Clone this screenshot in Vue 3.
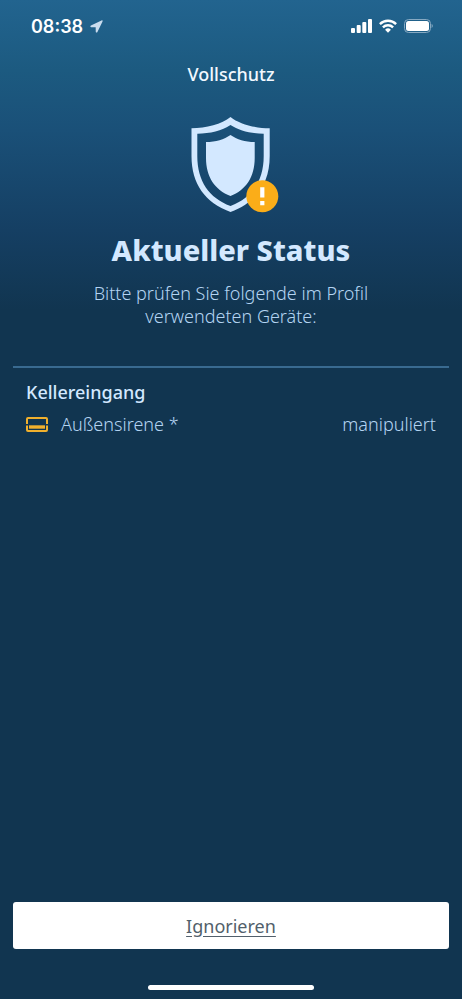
<script setup>
const title = 'Vollschutz'
const rooms = [
  {
    name: 'Kellereingang',
    devices: [{ name: 'Außensirene *', state: 'manipuliert' }]
  }
]
</script>

<template>
  <div class="screen">
    <div class="status-bar">
      <div class="clock">
        <span>08:38</span>
        <svg class="location" viewBox="0 0 14 14" aria-hidden="true">
          <path d="M12.4 0.5 L1 6 C0 6.500 0.300 7.700 1.300 7.700 L6.100 7.800 L6.200 12.600 C6.200 13.700 7.500 13.900 8 13 L13.500 1.600 C13.900 0.800 13.200 0.100 12.400 0.500 Z" />
        </svg>
      </div>
      <div class="indicators">
        <svg class="signal" viewBox="0 0 21 14" aria-hidden="true">
          <rect x="0" y="9" width="4" height="5" rx="1" />
          <rect x="5.700" y="6" width="4" height="8" rx="1" />
          <rect x="11.300" y="3" width="4" height="11" rx="1" />
          <rect x="17" y="0" width="4" height="14" rx="1" />
        </svg>
        <svg class="wifi" viewBox="0 0 18 14" aria-hidden="true">
          <path d="M0.900 5.100 A11.500 11.500 0 0 1 17.100 5.100" />
          <path d="M3.900 8.300 A7.300 7.300 0 0 1 14.100 8.300" />
          <path class="dot" d="M6.100 10.700 A4.200 4.200 0 0 1 11.900 10.700 L9 13.700 Z" />
        </svg>
        <svg class="battery" viewBox="0 0 29 14" aria-hidden="true">
          <rect class="case" x="0.5" y="0.5" width="26" height="13" rx="4" />
          <rect class="charge" x="2" y="2" width="23" height="10" rx="2.5" />
          <path class="tip" d="M27.600 4.800 Q30 7 27.600 9.200 Z" />
        </svg>
      </div>
    </div>

    <header class="title">{{ title }}</header>

    <main class="content">
      <section class="summary">
        <svg class="shield" viewBox="0 0 100 98" aria-hidden="true">
          <path
            class="shape"
            fill-rule="evenodd"
            d="M49.5 1 C41 8 25 12.3 10.5 12.3 V40 C10.5 68 24 86.5 49.5 96 C75 86.5 88.7 68 88.7 40 V12.3 C74 12.3 58 8 49.5 1 Z M49.5 9 C41 14.5 29 17.7 16.3 17.7 V40 C16.3 65 28 82 49.5 90 C71 82 82.7 65 82.7 40 V17.7 C70 17.7 58 14.5 49.5 9 Z"
          />
          <path class="shape" d="M49.5 19 C43 23.5 35 26 25 26 V42 C25 61 34 74 49.5 80 C65 74 73.7 61 73.7 42 V26 C64 26 56 23.5 49.5 19 Z" />
          <circle class="badge" cx="81.3" cy="80.3" r="16" />
          <path class="mark" d="M79.2 71.3 h4.2 v10.3 h-4.2 Z M79.2 85 h4.2 v4.2 h-4.2 Z" />
        </svg>
        <h1>Aktueller Status</h1>
        <p>Bitte prüfen Sie folgende im Profil verwendeten Geräte:</p>
      </section>

      <section v-for="room in rooms" :key="room.name" class="room">
        <h2>{{ room.name }}</h2>
        <ul>
          <li v-for="device in room.devices" :key="device.name">
            <svg class="siren" viewBox="0 0 22 15" aria-hidden="true">
              <path d="M1 7 V2 Q1 1 2 1 H20 Q21 1 21 2 V7 M1 8.6 V13 Q1 14 2 14 H20 Q21 14 21 13 V8.6" />
              <rect x="3" y="8.3" width="16" height="3.4" />
            </svg>
            <span class="device">{{ device.name }}</span>
            <span class="state">{{ device.state }}</span>
          </li>
        </ul>
      </section>
    </main>

    <footer>
      <button type="button">Ignorieren</button>
      <div class="home-indicator"></div>
    </footer>
  </div>
</template>

<style>
body {
  margin: 0;
  background: #113550;
}
</style>

<style scoped>
.screen {
  display: flex;
  flex-direction: column;
  box-sizing: border-box;
  min-height: 100vh;
  padding: 0 13px 9px;
  background: linear-gradient(#22648f 0, #1c5a80 70px, #1a5078 130px, #153f63 230px, #113550 310px);
  color: #d3e8ff;
  font-family: "Noto Sans", sans-serif;
  font-size: 18px;
}

.status-bar {
  display: flex;
  align-items: center;
  justify-content: space-between;
  height: 52px;
  padding: 0 16px 0 18px;
  color: #fff;
  font-family: Inter, sans-serif;
  font-size: 18px;
  font-weight: 600;
}

.clock,
.indicators {
  display: flex;
  align-items: center;
  gap: 7px;
}

.location {
  width: 13px;
  height: 13px;
  fill: #c9dcee;
}

.signal {
  width: 21px;
  height: 14px;
  fill: #fff;
}

.wifi {
  width: 18px;
  height: 14px;
  fill: none;
  stroke: #fff;
  stroke-width: 2.4;
}

.wifi .dot {
  fill: #fff;
  stroke: none;
}

.battery {
  width: 29px;
  height: 14px;
}

.case {
  fill: none;
  stroke: #86a9c2;
}

.charge {
  fill: #fff;
}

.tip {
  fill: #86a9c2;
}

.title {
  color: #f2f8ff;
  font-weight: 500;
  line-height: 44px;
  text-align: center;
}

.content {
  flex: 1;
}

.summary {
  display: flex;
  flex-direction: column;
  align-items: center;
  padding: 20px 64px 38px;
  border-bottom: 2px solid #396a90;
  text-align: center;
}

.shield {
  width: 100px;
  height: 98px;
}

.shape {
  fill: #d3e8ff;
}

.badge {
  fill: #fbad18;
}

.mark {
  fill: #fff;
}

h1 {
  margin: 16px 0 12px;
  font-size: 29px;
  font-weight: 800;
  line-height: 40px;
}

p {
  margin: 0;
  color: #b4d4f2;
  font-weight: 300;
  line-height: 23px;
}

.room {
  padding: 10px 13px;
}

h2 {
  margin: 0 0 4px;
  font-size: 18px;
  font-weight: 500;
  line-height: 28px;
}

ul {
  margin: 0;
  padding: 0;
  list-style: none;
}

li {
  display: flex;
  align-items: center;
  gap: 13px;
  color: #b4d4f2;
  font-weight: 300;
  line-height: 28px;
}

.siren {
  width: 22px;
  height: 15px;
  fill: #f0b02d;
}

.siren path {
  fill: none;
  stroke: #f0b02d;
  stroke-width: 2;
}

.state {
  margin-left: auto;
}

footer {
  display: flex;
  flex-direction: column;
  align-items: center;
  gap: 36px;
}

button {
  width: 100%;
  height: 47px;
  padding: 0;
  border: 0;
  border-radius: 3px;
  background: #fff;
  color: #525f6b;
  font: inherit;
  text-decoration: underline;
  text-underline-offset: 3px;
}

.home-indicator {
  width: 38%;
  height: 5px;
  border-radius: 3px;
  background: #fff;
}
</style>
